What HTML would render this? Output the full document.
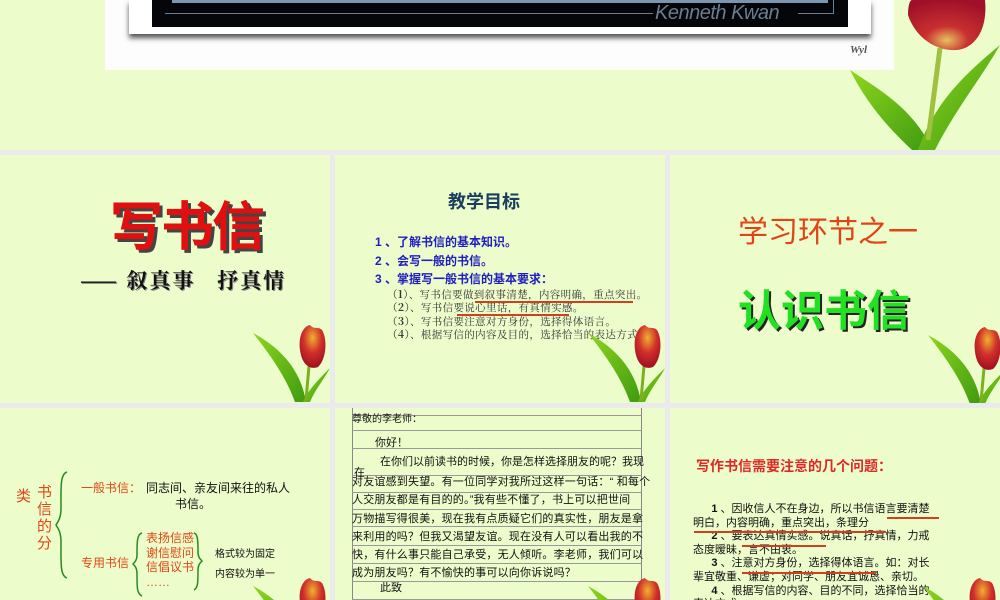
<!DOCTYPE html>
<html><head><meta charset="utf-8">
<style>
*{margin:0;padding:0;box-sizing:border-box}
body{width:1000px;height:600px;overflow:hidden;background:#ebebeb;position:relative;font-family:"Liberation Sans","Noto Sans CJK SC",sans-serif}
.s{position:absolute;background:#ecfcca;overflow:hidden}
.abs{position:absolute;white-space:nowrap}
.tul{position:absolute}
</style></head><body>
<svg width="0" height="0" style="position:absolute">
<defs>
<radialGradient id="fl" cx="0.5" cy="0.3" r="0.7"><stop offset="0" stop-color="#f0b030"/><stop offset="0.5" stop-color="#d0302a"/><stop offset="1" stop-color="#a01020"/></radialGradient>
<radialGradient id="fl2" cx="0.5" cy="0.8" r="0.8"><stop offset="0" stop-color="#e8c060"/><stop offset="0.35" stop-color="#c83030"/><stop offset="1" stop-color="#a01028"/></radialGradient>
<linearGradient id="lf" x1="0" y1="0" x2="1" y2="1"><stop offset="0" stop-color="#8ed61e"/><stop offset="1" stop-color="#3e9a10"/></linearGradient>
<g id="t">
<path d="M13 13 C35 25 60 45 66 82 L55 82 C45 55 30 35 13 13Z" fill="url(#lf)"/>
<path d="M90 48 C78 60 68 70 63 82 L70 82 C76 68 85 58 90 48Z" fill="url(#lf)"/>
<path d="M69 46 L66 80" stroke="#7cb020" stroke-width="3"/>
<path d="M60 30 C58 15 64 6 70 5 C74 10 78 6 82 10 C88 20 86 40 78 47 C70 50 62 45 60 30Z" fill="url(#fl)"/>
</g>
</defs></svg>

<!-- top slide -->
<div class="s" style="left:0;top:0;width:1000px;height:150px">
  <div class="abs" style="left:105px;top:0;width:789px;height:70px;background:#fdfdfd"></div>
  <div class="abs" style="left:129px;top:0;width:742px;height:34px;background:#fff;box-shadow:0 4px 5px #555"></div>
  <div class="abs" style="left:152px;top:0;width:696px;height:27px;background:#04060a"></div>
  <div class="abs" style="left:172px;top:0;width:656px;height:3px;background:#7d96b0"></div>
  <div class="abs" style="left:165px;top:13px;width:488px;height:1px;background:#6b7d90"></div>
  <div class="abs" style="left:798px;top:13px;width:35px;height:1px;background:#6b7d90"></div>
  <div class="abs" style="left:833px;top:0;width:1px;height:14px;background:#6b7d90"></div>
  <div class="abs" style="left:655px;top:2px;font-size:20px;font-style:italic;color:#6b7d90;letter-spacing:-0.5px">Kenneth Kwan</div>
  <div class="abs" style="left:850px;top:44px;font-size:11px;font-style:italic;font-weight:bold;color:#555;font-family:'Liberation Serif',serif">Wyl</div>
  <svg class="tul" style="left:840px;top:0" width="160" height="150" viewBox="0 0 160 150">
    <path d="M10 70 C40 90 75 110 92 150 L72 150 C45 125 25 100 10 70Z" fill="url(#lf)"/>
    <path d="M160 45 C130 70 95 100 78 150 L95 150 C115 110 140 80 160 45Z" fill="url(#lf)"/>
    <path d="M100 48 L88 140" stroke="#a0c040" stroke-width="5"/>
    <path d="M68 15 C68 5 70 0 72 0 L145 0 C147 20 142 40 125 48 C108 55 78 45 68 15Z" fill="url(#fl2)"/>
  </svg>
</div>

<!-- slide 1 -->
<div class="s" style="left:0;top:155px;width:330px;height:248px">
  <div class="abs" style="left:110px;top:30px;font-size:53px;font-weight:bold;color:#e01010;text-shadow:3px 3px 0 #444;letter-spacing:-2px">写书信</div>
  <div class="abs" style="left:80px;top:110px;font-size:21px;font-weight:bold;color:#111;text-shadow:1px 1px 0 #888;font-family:'Noto Serif CJK SC',serif;letter-spacing:2px">—— 叙真事&nbsp;&nbsp;&nbsp;抒真情</div>
  <svg class="tul" style="left:240px;top:165px" width="95" height="85" viewBox="0 0 95 85"><use href="#t"/></svg>
</div>

<!-- slide 2 -->
<div class="s" style="left:335px;top:155px;width:330px;height:248px">
  <div class="abs" style="left:113px;top:33px;font-size:18px;font-weight:bold;color:#1a3e5e">教学目标</div>
  <div class="abs" style="left:40px;top:78px;font-size:12px;font-weight:bold;color:#2020c0;line-height:19px">1 、了解书信的基本知识。<br>2 、会写一般的书信。</div>
  <div class="abs" style="left:40px;top:115px;font-size:12px;font-weight:bold;color:#2020c0">3 、掌握写一般书信的基本要求：</div>
  <div class="abs" style="left:52px;top:133px;font-size:10.5px;color:#333;line-height:13.3px;font-family:'Noto Serif CJK SC',serif;letter-spacing:0.35px">（<b>1</b>）、写书信要做到叙事清楚，内容明确，重点突出。<br>（<b>2</b>）、写书信要说心里话，有真情实感。<br>（<b>3</b>）、写书信要注意对方身份，选择得体语言。<br>（<b>4</b>）、根据写信的内容及目的，选择恰当的表达方式。</div>
  <div class="abs" style="left:140px;top:146px;width:158px;height:1.5px;background:#d04020"></div>
  <div class="abs" style="left:122px;top:159px;width:112px;height:1.5px;background:#d04020"></div>
  <svg class="tul" style="left:240px;top:165px" width="95" height="85" viewBox="0 0 95 85"><use href="#t"/></svg>
</div>

<!-- slide 3 -->
<div class="s" style="left:670px;top:155px;width:330px;height:248px">
  <div class="abs" style="left:68px;top:52px;font-size:30px;color:#e04418">学习环节之一</div>
  <div class="abs" style="left:68px;top:122px;font-size:43px;font-weight:bold;color:#22e022;text-shadow:2px 2px 0 #222">认识书信</div>
  <svg class="tul" style="left:245px;top:167px" width="95" height="85" viewBox="0 0 95 85"><use href="#t"/></svg>
</div>

<!-- slide 4 -->
<div class="s" style="left:0;top:408px;width:330px;height:192px">
  <div class="abs" style="left:16px;top:77px;font-size:15px;color:#e04818">类</div>
  <div class="abs" style="left:37px;top:76px;font-size:15px;color:#e04818;line-height:17px;white-space:normal;width:16px">书信的分</div>
  <svg class="abs" style="left:55px;top:60px" width="20" height="120"><path d="M12 4 C5 6 6 20 6 40 C6 50 3 54 1 57 C3 60 6 64 6 74 C6 95 5 108 12 110" fill="none" stroke="#2a8a20" stroke-width="1.5"/></svg>
  <div class="abs" style="left:81px;top:71px;font-size:12px;color:#e04818">一般书信：</div>
  <div class="abs" style="left:146px;top:71px;font-size:12px;color:#111">同志间、亲友间来往的私人</div>
  <div class="abs" style="left:175px;top:87px;font-size:12px;color:#111">书信。</div>
  <div class="abs" style="left:81px;top:146px;font-size:12px;color:#e04818">专用书信</div>
  <svg class="abs" style="left:132px;top:122px" width="16" height="70"><path d="M10 3 C5 4 5 12 5 25 C5 30 3 32 1 34 C3 36 5 38 5 44 C5 58 5 64 10 66" fill="none" stroke="#2a8a20" stroke-width="1.5"/></svg>
  <div class="abs" style="left:146px;top:123px;font-size:12px;color:#e04818;line-height:14.5px">表扬信感<br>谢信慰问<br>信倡议书<br>……</div>
  <svg class="abs" style="left:192px;top:122px" width="12" height="62"><path d="M2 3 C6 4 6 12 6 22 C6 27 8 29 10 31 C8 33 6 35 6 40 C6 52 6 58 2 60" fill="none" stroke="#2a8a20" stroke-width="1.5"/></svg>
  <div class="abs" style="left:215px;top:137px;font-size:10px;color:#111">格式较为固定</div>
  <div class="abs" style="left:215px;top:157px;font-size:10px;color:#111">内容较为单一</div>
  <svg class="tul" style="left:240px;top:165px" width="95" height="85" viewBox="0 0 95 85"><use href="#t"/></svg>
</div>

<!-- slide 5 -->
<div class="s" style="left:335px;top:408px;width:330px;height:192px">
  <div class="abs" style="left:17px;top:0;width:290px;height:192px;border-left:1px solid #888;border-right:1px solid #888"></div>
  <div class="abs" style="left:17px;top:7px;width:290px;height:1px;background:#999"></div>
  <div class="abs" style="left:17px;top:22px;width:290px;height:1px;background:#999"></div>
  <div class="abs" style="left:17px;top:40px;width:290px;height:1px;background:#999"></div>
  <div class="abs" style="left:17px;top:67px;width:290px;height:1px;background:#999"></div>
  <div class="abs" style="left:17px;top:84px;width:290px;height:1px;background:#999"></div>
  <div class="abs" style="left:17px;top:101px;width:290px;height:1px;background:#999"></div>
  <div class="abs" style="left:17px;top:118px;width:290px;height:1px;background:#999"></div>
  <div class="abs" style="left:17px;top:137px;width:290px;height:1px;background:#999"></div>
  <div class="abs" style="left:17px;top:155px;width:290px;height:1px;background:#999"></div>
  <div class="abs" style="left:17px;top:173px;width:290px;height:1px;background:#999"></div>
  <div class="abs" style="left:17px;top:191px;width:290px;height:1px;background:#999"></div>
  <div class="abs" style="left:17px;top:2px;font-size:10px;color:#111">尊敬的李老师：</div>
  <div class="abs" style="left:40px;top:26px;font-size:11px;color:#111">你好！</div>
  <div class="abs" style="left:45px;top:45px;font-size:11px;color:#111">在你们以前读书的时候，你是怎样选择朋友的呢？我现</div>
  <div class="abs" style="left:19px;top:56px;font-size:11px;color:#111">在</div>
  <div class="abs" style="left:17px;top:65px;font-size:11px;color:#111;line-height:18.3px;letter-spacing:0.2px">对友谊感到失望。有一位同学对我所过这样一句话：“ 和每个<br>人交朋友都是有目的的。”我有些不懂了，书上可以把世间<br>万物描写得很美，现在我有点质疑它们的真实性，朋友是拿<br>来利用的吗？但我又渴望友谊。现在没有人可以看出我的不<br>快，有什么事只能自己承受，无人倾听。李老师，我们可以<br>成为朋友吗？有不愉快的事可以向你诉说吗？</div>
  <div class="abs" style="left:45px;top:171px;font-size:11px;color:#111">此致</div>
  <svg class="tul" style="left:240px;top:165px" width="95" height="85" viewBox="0 0 95 85"><use href="#t"/></svg>
</div>

<!-- slide 6 -->
<div class="s" style="left:670px;top:408px;width:330px;height:192px">
  <div class="abs" style="left:26px;top:48px;font-size:14px;font-weight:bold;color:#e02828">写作书信需要注意的几个问题：</div>
  <div class="abs" style="left:23px;top:95px;font-size:11px;color:#111;line-height:13.6px">&nbsp;&nbsp;&nbsp;&nbsp;&nbsp;&nbsp;<b>1</b> 、因收信人不在身边，所以书信语言要清楚<br>明白，内容明确，重点突出，条理分<br>&nbsp;&nbsp;&nbsp;&nbsp;&nbsp;&nbsp;<b>2</b> 、要表达真情实感。说真话，抒真情，力戒<br>态度暧昧，言不由衷。<br>&nbsp;&nbsp;&nbsp;&nbsp;&nbsp;&nbsp;<b>3</b> 、注意对方身份，选择得体语言。如：对长<br>辈宜敬重、谦虚；对同学、朋友宜诚恳、亲切。<br>&nbsp;&nbsp;&nbsp;&nbsp;&nbsp;&nbsp;<b>4</b> 、根据写信的内容、目的不同，选择恰当的<br>表达方式。</div>
  <div class="abs" style="left:217px;top:109px;width:52px;height:1.5px;background:#d04020"></div>
  <div class="abs" style="left:24px;top:123px;width:192px;height:1.5px;background:#d04020"></div>
  <div class="abs" style="left:72px;top:137px;width:84px;height:1.5px;background:#d04020"></div>
  <div class="abs" style="left:72px;top:164px;width:134px;height:1.5px;background:#d04020"></div>
  <svg class="tul" style="left:240px;top:165px" width="95" height="85" viewBox="0 0 95 85"><use href="#t"/></svg>
</div>
</body></html>
